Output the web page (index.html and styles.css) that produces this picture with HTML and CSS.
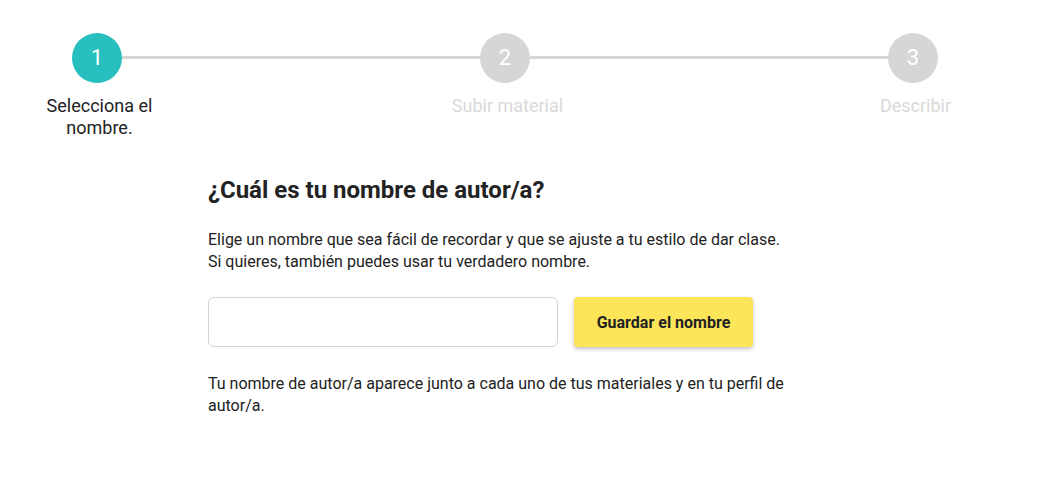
FILE: index.html
```html
<!DOCTYPE html>
<html lang="es">
<head>
    <meta charset="UTF-8">
    <meta name="viewport" content="width=device-width, initial-scale=1.0">
    <title>Nombre de autor/a</title>
    <link rel="stylesheet" href="styles.css">
</head>
<body>
    <div id="stepper">
        <div class="step active">
            <div class="step-circle">1</div>
            <p class="step-label">Selecciona el nombre.</p>
        </div>
        <div class="step-line"></div>
        <div class="step">
            <div class="step-circle">2</div>
            <p class="step-label">Subir material</p>
        </div>
        <div class="step-line"></div>
        <div class="step">
            <div class="step-circle">3</div>
            <p class="step-label">Describir</p>
        </div>
    </div>

    <div id="author-form">
        <h2>¿Cuál es tu nombre de autor/a?</h2>
        <p>Elige un nombre que sea fácil de recordar y que se ajuste a tu estilo de dar clase. Si quieres, también puedes usar tu verdadero nombre.</p>
        <div class="form-row">
            <input type="text" id="author-name">
            <button id="save-btn">Guardar el nombre</button>
        </div>
        <p>Tu nombre de autor/a aparece junto a cada uno de tus materiales y en tu perfil de autor/a.</p>
    </div>
</body>
</html>
```

FILE: styles.css
```css
body {
    font-family: Roboto, "Liberation Sans", sans-serif;
    background: #ffffff;
    color: #222222;
    margin: 0;
    padding: 0;
}
#stepper {
    display: flex;
    align-items: flex-start;
    width: 934px;
    margin: 0;
    padding: 33px 0 0 38px;
}
.step {
    display: flex;
    flex-direction: column;
    align-items: center;
    width: 118px;
    flex-shrink: 0;
}
.step-circle {
    width: 50px;
    height: 50px;
    border-radius: 50%;
    background: #d6d6d6;
    color: #ffffff;
    font-size: 22px;
    line-height: 50px;
    text-align: center;
}
.step.active .step-circle {
    background: #27c0bf;
}
.step-label {
    margin: 12px 0 0;
    padding-left: 5px;
    font-size: 18px;
    line-height: 22px;
    text-align: center;
    color: #d9d9d9;
}
.step.active .step-label {
    color: #222222;
}
.step-line {
    flex: 1;
    height: 3px;
    background: #d6d6d6;
    margin: 23px -34px 0;
}
#author-form {
    width: 580px;
    margin: 36px 0 0 208px;
}
#author-form h2 {
    font-size: 24px;
    font-weight: 700;
    line-height: 30px;
    margin: 0 0 24px;
}
#author-form p {
    font-size: 16px;
    line-height: 22px;
    margin: 0;
}
.form-row {
    display: flex;
    gap: 16px;
    margin: 24px 0 26px;
}
#author-name {
    width: 350px;
    height: 50px;
    box-sizing: border-box;
    border: 1px solid #d4d4d4;
    border-radius: 6px;
    padding: 0 12px;
    font-size: 16px;
    font-family: inherit;
}
#save-btn {
    width: 179px;
    height: 50px;
    background: #fde55a;
    color: #222222;
    border: none;
    border-radius: 4px;
    font-family: inherit;
    font-size: 16px;
    font-weight: 700;
    box-shadow: 0 2px 4px rgba(0, 0, 0, 0.25);
    cursor: pointer;
}
```
